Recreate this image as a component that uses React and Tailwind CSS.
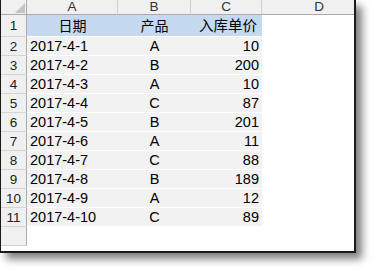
const rows = [
  ["2017-4-1", "A", "10"],
  ["2017-4-2", "B", "200"],
  ["2017-4-3", "A", "10"],
  ["2017-4-4", "C", "87"],
  ["2017-4-5", "B", "201"],
  ["2017-4-6", "A", "11"],
  ["2017-4-7", "C", "88"],
  ["2017-4-8", "B", "189"],
  ["2017-4-9", "A", "12"],
  ["2017-4-10", "C", "89"],
];

function ColHead({ children, last }) {
  return (
    <div
      className={`flex items-center justify-center bg-[#f0f0f0] border-b border-[#ababab] text-[13.5px] leading-none text-[#333] ${
        last ? "" : "border-r border-r-[#d0d0d0]"
      }`}
    >
      {children}
    </div>
  );
}

function RowHead({ children }) {
  return (
    <div className="flex items-center justify-center bg-[#f0f0f0] border-r border-[#ababab] border-b border-b-[#d4d4d4] text-[13.5px] leading-none text-[#222] pt-[1px]">
      {children}
    </div>
  );
}

export default function App() {
  return (
    <div className="w-[376px] h-[273px] bg-white overflow-hidden font-['Liberation_Sans','Noto_Sans_CJK_SC',sans-serif]">
      <div className="w-[356px] h-[253px] border-l border-r-2 border-b-2 border-[#1a1a1a] shadow-[6px_6px_8px_rgba(0,0,0,0.5)] overflow-hidden bg-white">
        <div className="grid grid-cols-[26px_91px_73px_71px_114px] grid-rows-[15px_22px_repeat(11,19px)]">
          {/* corner */}
          <div className="relative bg-[#f0f0f0] border-r border-[#ababab] border-b">
            <svg className="absolute left-[14px] top-[3px]" width="10" height="10" viewBox="0 0 10 10">
              <polygon points="10,0 10,10 0,10" fill="#c4c4c4" />
            </svg>
          </div>
          <ColHead>A</ColHead>
          <ColHead>B</ColHead>
          <ColHead>C</ColHead>
          <ColHead last>D</ColHead>

          {/* header row */}
          <RowHead>1</RowHead>
          <div className="flex items-center justify-center bg-[#c5d9f1] border-b border-white text-[14px] text-black pt-[2px]">
            日期
          </div>
          <div className="flex items-center justify-center bg-[#c5d9f1] border-b border-white text-[14px] text-black pt-[2px]">
            产品
          </div>
          <div className="flex items-center justify-end pr-[5px] bg-[#c5d9f1] border-b border-white text-[14.5px] text-black pt-[2px]">
            入库单价
          </div>
          <div className="bg-white" />

          {rows.map((r, i) => (
            <div key={i} className="contents">
              <RowHead>{i + 2}</RowHead>
              <div className="flex items-center pl-[3px] bg-[#f2f2f2] border-b border-white text-[14.5px] text-black pt-[1px]">
                {r[0]}
              </div>
              <div className="flex items-center justify-center bg-[#f2f2f2] border-b border-white text-[14.5px] text-black pt-[1px]">
                {r[1]}
              </div>
              <div className="flex items-center justify-end pr-[3px] bg-[#f2f2f2] border-b border-white text-[14.5px] text-black pt-[1px]">
                {r[2]}
              </div>
              <div className="bg-white" />
            </div>
          ))}

          <RowHead />
          <div />
          <div />
          <div />
          <div />
        </div>
      </div>
    </div>
  );
}
